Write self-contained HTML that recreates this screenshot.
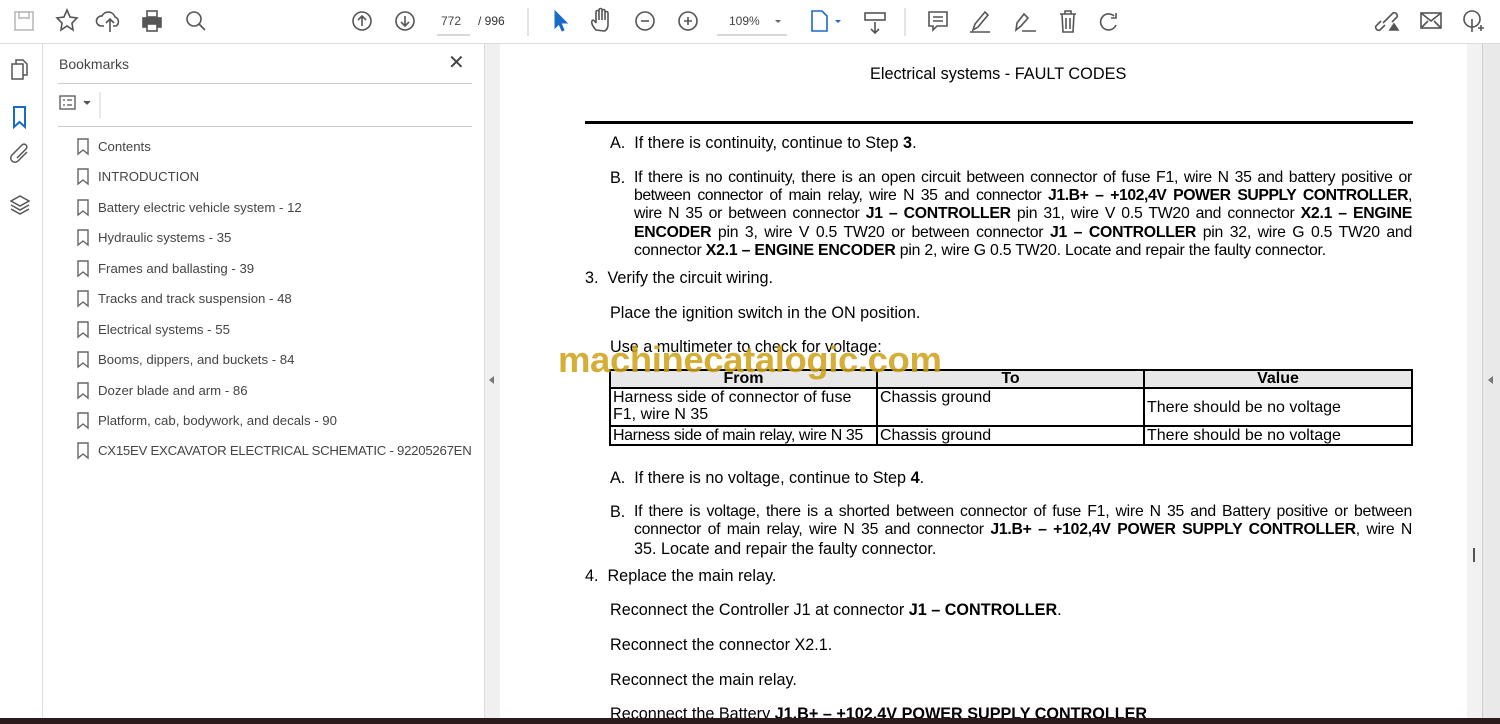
<!DOCTYPE html><html><head><style>
*{margin:0;padding:0;box-sizing:border-box}
body{width:1500px;height:724px;overflow:hidden;background:#fff;font-family:"Liberation Sans",sans-serif;position:relative}
.a{position:absolute}
#tb{left:0;top:0;width:1500px;height:44px;background:#fff;border-bottom:1px solid #ddd}
#rail{left:0;top:44px;width:43px;height:674px;background:#fff;border-right:1px solid #ddd}
#bm{left:44px;top:44px;width:441px;height:674px;background:#fff;border-right:1px solid #ddd}
#gut{left:485px;top:44px;width:15px;height:674px;background:#f0f0f0}
#sb{left:1467px;top:44px;width:16px;height:674px;background:#f2f2f2;border-right:1px solid #ccc}
#rg{left:1483px;top:44px;width:17px;height:674px;background:#e9e9e9}
.bi{position:absolute;left:77px;font-size:13.2px;color:#444;white-space:nowrap}
.bi svg{left:0;top:-1px}
.bi span{margin-left:21px}
.t{position:absolute;font-size:16.2px;color:#000;line-height:18.5px;white-space:nowrap}
.j{text-align:justify;text-align-last:justify;white-space:normal;width:778px;font-size:15.8px;letter-spacing:-0.25px}
svg{position:absolute}
td{border:2px solid #000;font-size:16px;padding:0 2px;line-height:17px;vertical-align:top}
</style></head><body>
<div id="tb" class="a">
<svg width="1500" height="44" fill="none" stroke="#555" stroke-width="1.6">
<rect x="15" y="12" width="18" height="18" stroke="#bbb"/><rect x="19" y="12" width="10" height="6" stroke="#bbb"/>
<path d="M67 10l3 7 7 1-5 5 1 7-6-4-6 4 1-7-5-5 7-1z"/>
<path d="M104 26h-3a5 5 0 0 1 1-10 7 7 0 0 1 13 1 5 5 0 0 1 1 9h-3M110 32v-13m-4 4 4-4 4 4"/>
<rect x="143" y="18" width="18" height="9" fill="#555"/><rect x="147" y="11" width="10" height="6"/><rect x="147" y="24" width="10" height="7" fill="#fff"/>
<circle cx="194" cy="19" r="7"/><path d="M199 24l6 6"/>
<circle cx="362" cy="21" r="9"/><path d="M362 26v-10m-4 4 4-4 4 4"/>
<circle cx="405" cy="21" r="9"/><path d="M405 16v10m-4-4 4 4 4-4"/>
<path d="M437 35h33M717 35h70" stroke="#ccc"/>
<path d="M528 8v28M905 8v28" stroke="#ddd"/>
<path d="M555 11l0 17 4-4 3 7 2-1-3-7 6 0z" fill="#1a6bc7" stroke="#1a6bc7" stroke-width="1"/>
<path d="M596 30c-3-3-5-7-4-9s3 0 4 2v-11a1.5 1.5 0 0 1 3 0v8-10a1.5 1.5 0 0 1 3 0v10-9a1.5 1.5 0 0 1 3 0v9-7a1.5 1.5 0 0 1 3 0v12c0 3-2 6-4 6z"/>
<circle cx="645" cy="21" r="9"/><path d="M641 21h8"/>
<circle cx="688" cy="21" r="9"/><path d="M684 21h8M688 17v8"/>
<path d="M775 20l3 3 3-3" fill="#666" stroke="none"/>
<path d="M812 11h10l5 5v15h-15z" stroke="#1a6bc7"/><path d="M835 20l3 3 3-3" fill="#1a6bc7" stroke="none"/>
<rect x="865" y="13" width="20" height="7"/><path d="M875 22v11m-4-4 4 4 4-4"/>
<path d="M929 12h18v14h-10l-4 4v-4h-4z"/><path d="M933 17h10M933 21h10"/>
<path d="M973 30l2-6 10-12 3 3-10 12z M970 32h20" />
<path d="M1016 30l1-7 7-9 4 4-7 8z M1022 31h14" />
<path d="M1060 14h16M1065 14v-3h6v3M1062 14l1 18h10l1-18M1066 18v11M1070 18v11"/>
<path d="M1114 16a8 8 0 1 0 2 9M1116 13v5h-5"/>
<path d="M1385 25l-5 5a3 3 0 0 1-4-4l5-5M1388 18l5-5a3 3 0 0 1 4 4l-5 5M1383 23l6-6"/><path d="M1390 30l4-6 4 6z" fill="#555"/>
<rect x="1421" y="13" width="20" height="15"/><path d="M1421 13l10 8 10-8M1421 28l7-7M1441 28l-7-7"/>
<circle cx="1472" cy="19" r="8"/><path d="M1472 19v13M1478 28h6M1481 25v6"/>
</svg>
<div class="a" style="left:441px;top:14px;font-size:12px;color:#444">772</div>
<div class="a" style="left:478px;top:14px;font-size:12px;color:#333">/ 996</div>
<div class="a" style="left:729px;top:14px;font-size:12px;color:#444">109%</div>
</div>
<div id="rail" class="a">
<svg width="43" height="200" fill="none" stroke="#555" stroke-width="1.5">
<rect x="12" y="20" width="11" height="15"/><path d="M16 20v-4h7l4 4v11h-4"/>
<path d="M14 63h11v20l-5.5-5-5.5 5z" stroke="#1a6bc7" stroke-width="2"/>
<path d="M27 108l-9 9a4 4 0 0 1-6-6l10-10a2.5 2.5 0 0 1 4 4l-9 9"/>
<path d="M20 152l9 5-9 5-9-5z M11 161l9 5 9-5M11 165l9 5 9-5"/>
</svg>
</div>
<div id="bm" class="a">
<div class="a" style="left:15px;top:12px;font-size:14px;color:#444">Bookmarks</div>
<div class="a" style="left:404px;top:6px;font-size:20px;color:#444">✕</div>
<div class="a" style="left:14px;top:39px;width:414px;height:1px;background:#ccc"></div>
<svg width="60" height="30" style="left:14px;top:48px" fill="none" stroke="#555" stroke-width="1.3"><rect x="2" y="4" width="15" height="13"/><path d="M5 8h2M9 8h5M5 13h2M9 13h5"/><path d="M26 9l3 3 3-3" fill="#555"/><path d="M42 0v26" stroke="#ddd"/></svg>
<div class="a" style="left:14px;top:82px;width:414px;height:1px;background:#ccc"></div>
</div>
<div class="bi" style="top:139px"><svg width="12" height="18" fill="none" stroke="#666" stroke-width="1.4"><path d="M1 1h10v15l-5-4-5 4z"/></svg><span>Contents</span></div>
<div class="bi" style="top:169px"><svg width="12" height="18" fill="none" stroke="#666" stroke-width="1.4"><path d="M1 1h10v15l-5-4-5 4z"/></svg><span>INTRODUCTION</span></div>
<div class="bi" style="top:200px"><svg width="12" height="18" fill="none" stroke="#666" stroke-width="1.4"><path d="M1 1h10v15l-5-4-5 4z"/></svg><span>Battery electric vehicle system - 12</span></div>
<div class="bi" style="top:230px"><svg width="12" height="18" fill="none" stroke="#666" stroke-width="1.4"><path d="M1 1h10v15l-5-4-5 4z"/></svg><span>Hydraulic systems - 35</span></div>
<div class="bi" style="top:261px"><svg width="12" height="18" fill="none" stroke="#666" stroke-width="1.4"><path d="M1 1h10v15l-5-4-5 4z"/></svg><span>Frames and ballasting - 39</span></div>
<div class="bi" style="top:291px"><svg width="12" height="18" fill="none" stroke="#666" stroke-width="1.4"><path d="M1 1h10v15l-5-4-5 4z"/></svg><span>Tracks and track suspension - 48</span></div>
<div class="bi" style="top:322px"><svg width="12" height="18" fill="none" stroke="#666" stroke-width="1.4"><path d="M1 1h10v15l-5-4-5 4z"/></svg><span>Electrical systems - 55</span></div>
<div class="bi" style="top:352px"><svg width="12" height="18" fill="none" stroke="#666" stroke-width="1.4"><path d="M1 1h10v15l-5-4-5 4z"/></svg><span>Booms, dippers, and buckets - 84</span></div>
<div class="bi" style="top:383px"><svg width="12" height="18" fill="none" stroke="#666" stroke-width="1.4"><path d="M1 1h10v15l-5-4-5 4z"/></svg><span>Dozer blade and arm - 86</span></div>
<div class="bi" style="top:413px"><svg width="12" height="18" fill="none" stroke="#666" stroke-width="1.4"><path d="M1 1h10v15l-5-4-5 4z"/></svg><span>Platform, cab, bodywork, and decals - 90</span></div>
<div class="bi" style="top:443px;letter-spacing:-0.25px"><svg width="12" height="18" fill="none" stroke="#666" stroke-width="1.4"><path d="M1 1h10v15l-5-4-5 4z"/></svg><span>CX15EV EXCAVATOR ELECTRICAL SCHEMATIC - 92205267EN</span></div>
<div id="gut" class="a"><div class="a" style="left:4px;top:332px;width:0;height:0;border:4px solid transparent;border-right:5px solid #777;border-left:none"></div></div>
<div id="sb" class="a"><div class="a" style="left:6px;top:504px;width:2px;height:14px;background:#555"></div></div>
<div id="rg" class="a"><div class="a" style="left:5px;top:332px;border:4px solid transparent;border-right:5px solid #777;border-left:none"></div></div>

<div class="t" style="left:870px;top:65px;font-size:16.3px">Electrical systems - FAULT CODES</div>
<div class="a" style="left:585px;top:121px;width:828px;height:3px;background:#000"></div>
<div class="t" style="left:610px;top:134px">A.&nbsp; If there is continuity, continue to Step <b>3</b>.</div>
<div class="t" style="left:610px;top:169px">B.</div>
<div class="t j" style="left:634px;top:169px">If there is no continuity, there is an open circuit between connector of fuse F1, wire N 35 and battery positive or</div>
<div class="t j" style="left:634px;top:187px;letter-spacing:-0.45px">between connector of main relay, wire N 35 and connector <b>J1.B+ – +102,4V POWER SUPPLY CONTROLLER</b>,</div>
<div class="t j" style="left:634px;top:205px">wire N 35 or between connector <b>J1 – CONTROLLER</b> pin 31, wire V 0.5 TW20 and connector <b>X2.1 – ENGINE</b></div>
<div class="t j" style="left:634px;top:224px"><b>ENCODER</b> pin 3, wire V 0.5 TW20 or between connector <b>J1 – CONTROLLER</b> pin 32, wire G 0.5 TW20 and</div>
<div class="t" style="left:634px;top:242px;font-size:15.8px;letter-spacing:-0.2px">connector <b>X2.1 – ENGINE ENCODER</b> pin 2, wire G 0.5 TW20. Locate and repair the faulty connector.</div>
<div class="t" style="left:585px;top:269px">3.&nbsp; Verify the circuit wiring.</div>
<div class="t" style="left:610px;top:304px">Place the ignition switch in the ON position.</div>
<div class="t" style="left:610px;top:338px">Use a multimeter to check for voltage:</div>
<table class="a" style="left:609px;top:369px;width:804px;border-collapse:collapse">
<tr style="background:#e8e8e8"><th style="border:2px solid #000;font-size:16px;line-height:16px;width:267px">From</th><th style="border:2px solid #000;font-size:16px;line-height:16px;width:267px">To</th><th style="border:2px solid #000;font-size:16px;line-height:16px">Value</th></tr>
<tr><td style="height:38px">Harness side of connector of fuse<br>F1, wire N 35</td><td>Chassis ground</td><td style="vertical-align:middle">There should be no voltage</td></tr>
<tr><td style="white-space:nowrap;letter-spacing:-0.4px">Harness side of main relay, wire N 35</td><td>Chassis ground</td><td>There should be no voltage</td></tr>
</table>
<div class="a" style="left:558px;top:339px;font-size:36.5px;font-weight:bold;color:rgba(205,160,20,0.85);letter-spacing:-0.4px">machinecatalogic.com</div>
<div class="t" style="left:610px;top:469px">A.&nbsp; If there is no voltage, continue to Step <b>4</b>.</div>
<div class="t" style="left:610px;top:503px">B.</div>
<div class="t j" style="left:634px;top:503px">If there is voltage, there is a shorted between connector of fuse F1, wire N 35 and Battery positive or between</div>
<div class="t j" style="left:634px;top:521px">connector of main relay, wire N 35 and connector <b>J1.B+ – +102,4V POWER SUPPLY CONTROLLER</b>, wire N</div>
<div class="t" style="left:634px;top:540px">35. Locate and repair the faulty connector.</div>
<div class="t" style="left:585px;top:567px">4.&nbsp; Replace the main relay.</div>
<div class="t" style="left:610px;top:601px">Reconnect the Controller J1 at connector <b>J1 – CONTROLLER</b>.</div>
<div class="t" style="left:610px;top:636px">Reconnect the connector X2.1.</div>
<div class="t" style="left:610px;top:671px">Reconnect the main relay.</div>
<div class="t" style="left:610px;top:705px">Reconnect the Battery <b>J1.B+ – +102,4V POWER SUPPLY CONTROLLER</b></div>
<div class="a" style="left:0;top:718px;width:1500px;height:6px;background:#2b1b1d"></div>
</body></html>
